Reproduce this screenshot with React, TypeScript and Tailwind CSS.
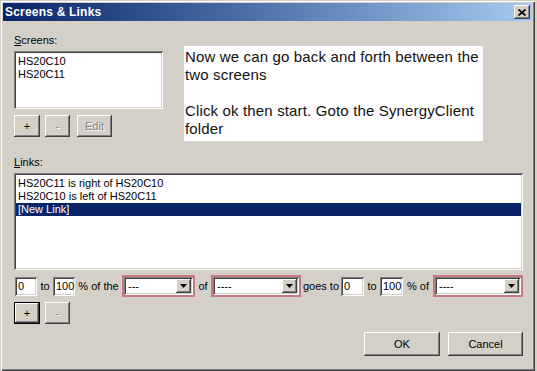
import React from "react";

const sunken =
  "shadow-[inset_1px_1px_0_#808080,inset_-1px_-1px_0_#ffffff,inset_2px_2px_0_#404040,inset_-2px_-2px_0_#d4d0c8]";
const raised =
  "shadow-[inset_-1px_-1px_0_#404040,inset_1px_1px_0_#ffffff,inset_-2px_-2px_0_#808080,inset_2px_2px_0_#d4d0c8]";
const raisedDefault =
  "shadow-[inset_0_0_0_1px_#000000,inset_-2px_-2px_0_#404040,inset_2px_2px_0_#ffffff,inset_-3px_-3px_0_#808080]";

function Btn({
  label,
  w,
  disabled,
  isDefault,
}: {
  label: string;
  w: string;
  disabled?: boolean;
  isDefault?: boolean;
}) {
  return (
    <div
      className={`${w} h-full bg-[#d4d0c8] flex items-center justify-center ${
        isDefault ? raisedDefault : raised
      } ${disabled ? "text-[#808080] [text-shadow:1px_1px_0_#ffffff]" : "text-black"}`}
    >
      {label}
    </div>
  );
}

function Field({ w, value }: { w: string; value: string }) {
  return (
    <div className={`${w} h-[19px] bg-white ${sunken} pl-[3px] flex items-center text-[11px] leading-none`}>
      {value}
    </div>
  );
}

function Label({ w, text }: { w: string; text: string }) {
  return <div className={`${w} text-center text-[11px] leading-none`}>{text}</div>;
}

function Combo({ w, value }: { w: string; value: string }) {
  return (
    <div className={`${w} h-[22px] border-2 border-[#c87880] flex`}>
      <div className={`flex-1 bg-white ${sunken} flex items-center pl-[4px] pr-[2px] py-[2px]`}>
        <span className="flex-1 text-[11px] leading-none">{value}</span>
        <div className={`w-[15px] h-[14px] bg-[#d4d0c8] ${raised} flex items-center justify-center`}>
          <svg width="7" height="4" viewBox="0 0 7 4">
            <polygon points="0,0 7,0 3.5,4" fill="#000" />
          </svg>
        </div>
      </div>
    </div>
  );
}

export default function App() {
  return (
    <div className="w-[537px] h-[371px] bg-[#d4d0c8] font-['Liberation_Sans',Arial,sans-serif] text-[11px] text-black overflow-hidden">
      <div className="w-[535px] h-[371px] bg-[#d4d0c8] shadow-[inset_1px_1px_0_#d4d0c8,inset_2px_2px_0_#ffffff,inset_-1px_-1px_0_#404040,inset_-2px_-2px_0_#808080] pt-[3px]">
        {/* Title bar */}
        <div className="ml-[3px] w-[529px] h-[18px] bg-gradient-to-r from-[#0a246a] to-[#a6caf0] flex items-center pl-[2px] pr-[2px]">
          <span className="flex-1 text-white font-bold text-[12px] tracking-[0.2px] leading-none">Screens &amp; Links</span>
          <div className={`w-[16px] h-[14px] bg-[#d4d0c8] ${raised} flex items-center justify-center`}>
            <svg width="8" height="7" viewBox="0 0 8 7">
              <path d="M0.5 0.5 L7.5 6.5 M7.5 0.5 L0.5 6.5" stroke="#000" strokeWidth="1.6" />
            </svg>
          </div>
        </div>

        {/* Content */}
        <div className="pl-[14px] pr-[12px]">
          {/* Top row */}
          <div className="flex mt-[12px]">
            <div className="w-[149px] flex flex-col">
              <div className="h-[14px] leading-[14px]">
                <span className="underline">S</span>creens:
              </div>
              <div className={`mt-[4px] h-[58px] bg-white ${sunken} pt-[4px] pl-[4px] leading-[13px]`}>
                <div>HS20C10</div>
                <div>HS20C11</div>
              </div>
              <div className="mt-[6px] h-[22px] flex">
                <Btn label="+" w="w-[26px]" />
                <div className="ml-[5px] h-full">
                  <Btn label="-" w="w-[25px]" disabled />
                </div>
                <div className="ml-[7px] h-full">
                  <Btn label="Edit" w="w-[35px]" disabled />
                </div>
              </div>
            </div>
            <div className="ml-[21px] mt-[13px] w-[299px] h-[95px] bg-white pt-[2px] pl-[1px] text-[15px] tracking-[0.15px] leading-[18px] text-[#111]">
              <div>Now we can go back and forth between the</div>
              <div>two screens</div>
              <div>&nbsp;</div>
              <div>Click ok then start. Goto the SynergyClient</div>
              <div>folder</div>
            </div>
          </div>

          {/* Links */}
          <div className="mt-[14px] h-[14px] leading-[14px]">
            <span className="underline">L</span>inks:
          </div>
          <div className={`mt-[4px] h-[97px] bg-white ${sunken} pt-[4px] px-[2px] leading-[13px]`}>
            <div className="pl-[2px]">HS20C11 is right of HS20C10</div>
            <div className="pl-[2px]">HS20C10 is left of HS20C11</div>
            <div className="pl-[2px] bg-[#0a246a] text-white">[New Link]</div>
          </div>

          {/* Bottom row */}
          <div className="mt-[5px] h-[22px] flex items-center">
            <div className="ml-[1px]">
              <Field w="w-[22px]" value="0" />
            </div>
            <Label w="w-[16px]" text="to" />
            <Field w="w-[22px]" value="100" />
            <Label w="w-[47px]" text="% of the" />
            <Combo w="w-[73px]" value="---" />
            <Label w="w-[16px]" text="of" />
            <Combo w="w-[90px]" value="----" />
            <Label w="w-[40px]" text="goes to" />
            <Field w="w-[23px]" value="0" />
            <Label w="w-[16px]" text="to" />
            <Field w="w-[23px]" value="100" />
            <Label w="w-[30px]" text="% of" />
            <Combo w="w-[90px]" value="----" />
          </div>

          {/* +/- row */}
          <div className="mt-[5px] h-[22px] flex">
            <Btn label="+" w="w-[26px]" isDefault />
            <div className="ml-[5px] h-full">
              <Btn label="-" w="w-[25px]" disabled />
            </div>
          </div>

          {/* OK / Cancel */}
          <div className="mt-[8px] h-[24px] flex justify-end">
            <Btn label="OK" w="w-[76px]" />
            <div className="ml-[8px] h-full">
              <Btn label="Cancel" w="w-[75px]" />
            </div>
          </div>
        </div>
      </div>
    </div>
  );
}
